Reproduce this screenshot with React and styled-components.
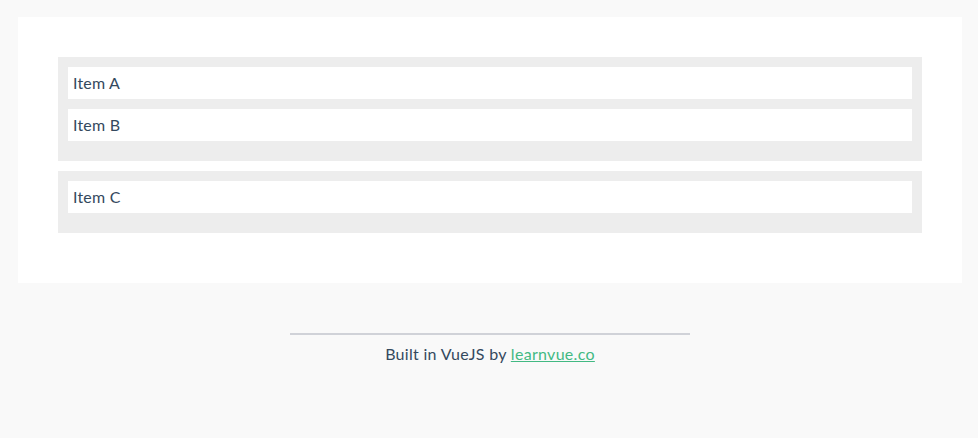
import React from 'react';
import styled, { createGlobalStyle } from 'styled-components';

const groups = [
  ['Item A', 'Item B'],
  ['Item C'],
];

const App = () => (
  <>
    <GlobalStyle />
    <Page>
      <Panel>
        {groups.map((items, index) => (
          <Group key={index}>
            {items.map(item => (
              <Item key={item}>{item}</Item>
            ))}
          </Group>
        ))}
      </Panel>

      <Footer>
        <Rule />
        <p>
          Built in VueJS by <a href="#">learnvue.co</a>
        </p>
      </Footer>
    </Page>
  </>
);

const GlobalStyle = createGlobalStyle`
  html, body {
    margin: 0;
    background: #f9f9f9;
    font-family: Lato, "Open Sans", sans-serif;
    color: #2c3e50;
  }
`;

const Page = styled.div`
  padding: 17px 16px 0 18px;
`;

const Panel = styled.div`
  background: #fff;
  padding: 40px 40px 50px;
  display: flex;
  flex-direction: column;
  gap: 10px;
`;

const Group = styled.div`
  background: #ededed;
  padding: 10px 10px 20px;
  display: flex;
  flex-direction: column;
  gap: 10px;
`;

const Item = styled.div`
  background: #fff;
  height: 32px;
  box-sizing: border-box;
  padding: 0 5px 2px;
  display: flex;
  align-items: center;
  font-size: 16px;
  letter-spacing: 0.2px;
  color: #34495e;
`;

const Footer = styled.footer`
  display: flex;
  flex-direction: column;
  align-items: center;
  margin-top: 50px;

  p {
    margin: 9px 0 0;
    font-size: 16px;
    line-height: 20px;
    letter-spacing: 0.3px;
    color: #34495e;
  }

  a {
    color: #42b983;
    text-decoration: underline;
  }
`;

const Rule = styled.hr`
  width: 400px;
  margin: 0;
  border: none;
  border-top: 2px solid #d0d2d8;
`;

export default App;
